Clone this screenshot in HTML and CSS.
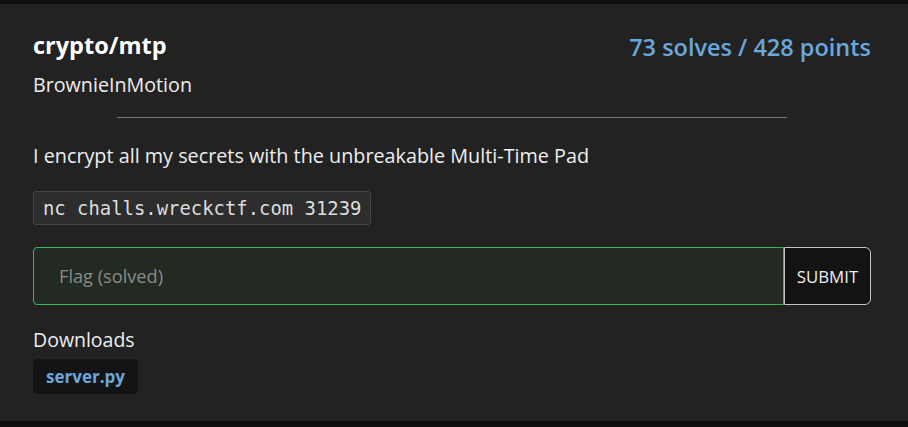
FILE: index.html
```html
<!DOCTYPE html>
<html>
<head>
<meta charset="utf-8">
<link rel="stylesheet" href="styles.css">
</head>
<body>
<div class="card">
  <div class="head">
    <div class="title-block">
      <h1 class="title">crypto/mtp</h1>
      <div class="author">BrownieInMotion</div>
    </div>
    <div class="stats">73 solves / 428 points</div>
  </div>
  <hr class="divider">
  <p class="desc">I encrypt all my secrets with the unbreakable Multi-Time Pad</p>
  <code class="cmd">nc challs.wreckctf.com 31239</code>
  <form class="flag-form">
    <input class="flag-input" type="text" placeholder="Flag (solved)">
    <button class="submit" type="button">SUBMIT</button>
  </form>
  <div class="downloads">
    <div class="dl-label">Downloads</div>
    <a class="dl-file">server.py</a>
  </div>
</div>
</body>
</html>
```
FILE: styles.css
```css
html, body {
  margin: 0;
  padding: 0;
  background: #111;
}
body {
  font-family: "Open Sans", "Noto Sans", sans-serif;
  color: #eee;
  height: 427px;
  overflow: hidden;
}
.card {
  margin-top: 4px;
  background: #222;
  padding: 26px 37px 27px 33px;
  box-shadow: 0 0 4px rgba(0,0,0,0.6);
}
.head {
  display: flex;
  justify-content: space-between;
  align-items: flex-start;
}
.title {
  margin: 0;
  font-size: 23.5px;
  font-weight: 700;
  line-height: 30px;
  color: #fff;
}
.author {
  margin-top: 12px;
  font-size: 19.7px;
  line-height: 26px;
  color: #eee;
}
.stats {
  font-size: 23.5px;
  font-weight: 600;
  line-height: 30px;
  color: #6aa7dc;
  margin-top: 2px;
}
.divider {
  width: 80%;
  border: 0;
  border-top: 1px solid #777;
  margin: 19px auto 0;
}
.desc {
  margin: 25px 0 0;
  font-size: 19.8px;
  line-height: 26px;
}
.cmd {
  display: block;
  width: fit-content;
  margin-top: 22px;
  padding: 3px 9px 3px 9px;
  background: #2d2d2d;
  border: 1px solid #444;
  border-radius: 3px;
  font-family: "DejaVu Sans Mono", "Liberation Mono", monospace;
  font-size: 18.9px;
  line-height: 26px;
  color: #ddd;
}
.flag-form {
  display: flex;
  margin-top: 22px;
  height: 58px;
}
.flag-input {
  flex: 1;
  box-sizing: border-box;
  height: 58px;
  background: #232a22;
  border: 1px solid #34b852;
  border-radius: 4px 0 0 4px;
  padding: 0 25px;
  font-family: inherit;
  font-size: 18.2px;
  color: #eee;
  outline: none;
}
.flag-input::placeholder {
  color: #8a8a8a;
}
.submit {
  box-sizing: border-box;
  width: 87px;
  height: 58px;
  background: #131313;
  border: 1px solid #c4c4c4;
  border-radius: 0 6px 6px 0;
  color: #eee;
  font-family: inherit;
  font-size: 16.8px;
  padding: 0;
}
.downloads {
  margin-top: 22px;
}
.dl-label {
  font-size: 19.5px;
  line-height: 26px;
  color: #eee;
}
.dl-file {
  display: inline-block;
  margin-top: 6px;
  padding: 5px 13px;
  background: #141414;
  border-radius: 4px;
  color: #6aa7dc;
  font-weight: 700;
  font-size: 17px;
  line-height: 25px;
  vertical-align: top;
}
```
